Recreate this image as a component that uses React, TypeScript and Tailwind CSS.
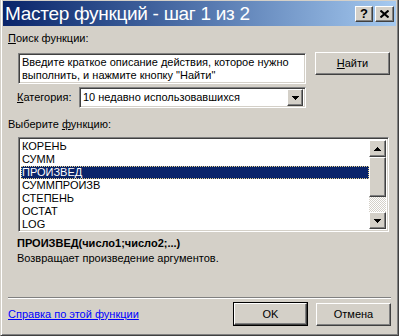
import React from "react";

const raised =
  "border border-t-white border-l-white border-r-[#404040] border-b-[#404040] shadow-[inset_-1px_-1px_#808080]";
const sunken =
  "border border-t-[#808080] border-l-[#808080] border-r-white border-b-white shadow-[inset_1px_1px_#404040,inset_-1px_-1px_#d4d0c8]";

const items = ["КОРЕНЬ", "СУММ", "ПРОИЗВЕД", "СУММПРОИЗВ", "СТЕПЕНЬ", "ОСТАТ", "LOG"];

function Arrow({ up }: { up?: boolean }) {
  return (
    <svg width="7" height="4" viewBox="0 0 7 4" className={up ? "rotate-180" : ""}>
      <path d="M0 0h7L3.5 4z" fill="#000" shapeRendering="crispEdges" />
    </svg>
  );
}

export default function App() {
  return (
    <div className="w-[399px] h-[336px] bg-[#d4d0c8] font-['Liberation_Sans',Arial,sans-serif] text-[11px] leading-[13px] text-black border-l border-r border-b border-l-[#d4d0c8] border-r-[#404040] border-b-[#404040] shadow-[inset_1px_0_white,inset_-1px_-1px_#808080] px-[2px] pb-[2px] flex flex-col overflow-hidden">
      {/* title bar */}
      <div className="h-[25px] mt-[1px] bg-linear-to-r from-[#0a246a] to-[#a6caf0] flex items-center pl-[2px] pr-[2px]">
        <span className="text-white text-[19px] leading-[22px] tracking-[-0.3px] flex-1">
          Мастер функций - шаг 1 из 2
        </span>
        <div className="flex gap-[2px]">
          <div className={`${raised} w-[18px] h-[16px] bg-[#d4d0c8] flex items-center justify-center font-bold text-[13px] leading-none`}>
            ?
          </div>
          <div className={`${raised} w-[19px] h-[16px] bg-[#d4d0c8] flex items-center justify-center`}>
            <svg width="9" height="8" viewBox="0 0 9 8">
              <path d="M0.5 0.5L8.5 7.5M8.5 0.5L0.5 7.5" stroke="#000" strokeWidth="2" />
            </svg>
          </div>
        </div>
      </div>

      {/* body */}
      <div className="flex flex-col pl-[5px] pr-[5px]">
        <div className="mt-[6px]">
          <span className="underline">П</span>оиск функции:
        </div>

        <div className="flex mt-[8px] ml-[10px]">
          <div className={`${sunken} w-[288px] h-[31px] bg-white px-[3px] pt-[2px]`}>
            Введите краткое описание действия, которое нужно выполнить, и нажмите кнопку "Найти"
          </div>
          <div className={`${raised} ml-[9px] -mt-[1px] w-[75px] h-[23px] flex items-center justify-center`}>
            <span>
              <span className="underline">Н</span>айти
            </span>
          </div>
        </div>

        <div className="flex items-center mt-[3px] ml-[9px]">
          <div className="w-[62px]">
            <span className="underline">К</span>атегория:
          </div>
          <div className={`${sunken} w-[227px] h-[21px] bg-white flex items-center pl-[3px] pr-[2px]`}>
            <span className="flex-1">10 недавно использовавшихся</span>
            <div className={`${raised} w-[16px] h-[17px] bg-[#d4d0c8] flex items-center justify-center`}>
              <Arrow />
            </div>
          </div>
        </div>

        <div className="mt-[10px]">
          Выберите <span className="underline">ф</span>ункцию:
        </div>

        <div className={`${sunken} mt-[6px] ml-[10px] w-[371px] h-[95px] bg-white flex p-[2px]`}>
          <div className="flex-1 flex flex-col">
            {items.map((it) => (
              <div
                key={it}
                className={
                  it === "ПРОИЗВЕД"
                    ? "h-[13px] bg-[#0a246a] text-white pl-[1px] outline outline-dotted outline-[#e8d48c] -outline-offset-1"
                    : "h-[13px] pl-[1px]"
                }
              >
                {it}
              </div>
            ))}
          </div>
          <div className="w-[17px] flex flex-col">
            <div className={`${raised} h-[17px] bg-[#d4d0c8] flex items-center justify-center`}>
              <Arrow up />
            </div>
            <div className={`${raised} h-[40px] bg-[#d4d0c8]`} />
            <div className="flex-1 bg-[repeating-conic-gradient(#ffffff_0%_25%,#d4d0c8_0%_50%)] bg-[length:2px_2px]" />
            <div className={`${raised} h-[17px] bg-[#d4d0c8] flex items-center justify-center`}>
              <Arrow />
            </div>
          </div>
        </div>

        <div className="mt-[5px] ml-[9px] font-bold">ПРОИЗВЕД(число1;число2;...)</div>
        <div className="mt-[2px] ml-[9px]">Возвращает произведение аргументов.</div>

        <div className="mt-[32px] h-[2px] border-t border-t-[#808080] border-b border-b-white" />

        <div className="flex items-center mt-[3px]">
          <span className="flex-1 text-[#0000ff] underline">Справка по этой функции</span>
          <div className="w-[75px] h-[24px] border border-black">
            <div className={`${raised} w-full h-full flex items-center justify-center`}>OK</div>
          </div>
          <div className={`${raised} ml-[8px] w-[75px] h-[23px] flex items-center justify-center`}>Отмена</div>
        </div>
      </div>
    </div>
  );
}
